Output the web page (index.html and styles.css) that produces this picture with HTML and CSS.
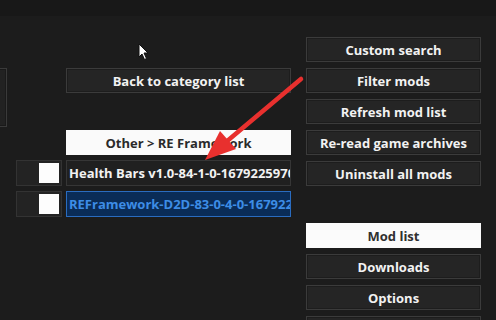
FILE: index.html
```html
<!DOCTYPE html>
<html>
<head>
<meta charset="utf-8">
<link rel="stylesheet" href="styles.css">
</head>
<body>
<div class="topbar"></div>
<div class="screen">
  <div class="left">
    <div class="stub"></div>
    <div class="btn back">Back to category list</div>
    <div class="crumb">Other &gt; RE Framework</div>
    <div class="check r4"><span class="box"></span></div>
    <div class="item r4">Health Bars v1.0-84-1-0-1679225970</div>
    <div class="check r5"><span class="box"></span></div>
    <div class="item sel r5">REFramework-D2D-83-0-4-0-1679224512</div>
  </div>
  <div class="right">
    <div class="btn">Custom search</div>
    <div class="btn">Filter mods</div>
    <div class="btn">Refresh mod list</div>
    <div class="btn">Re-read game archives</div>
    <div class="btn">Uninstall all mods</div>
    <div class="btn active gapTop">Mod list</div>
    <div class="btn">Downloads</div>
    <div class="btn">Options</div>
    <div class="btn"></div>
  </div>
</div>
<svg class="cursor" width="12" height="18" viewBox="0 0 12 18">
  <path d="M1 1 L1 14 L4 11 L6.5 16.5 L8.5 15.5 L6 10 L10 10 Z" fill="#fff" stroke="#111" stroke-width="1"/>
</svg>
<svg class="arrow" width="496" height="320" viewBox="0 0 496 320">
  <line x1="301" y1="79" x2="226" y2="142" stroke="#e8302e" stroke-width="4.5" stroke-linecap="round"/>
  <polygon points="205,160 236,149 220,131" fill="#e8302e"/>
</svg>
</body>
</html>
```
FILE: styles.css
```css
html, body {
  margin: 0;
  padding: 0;
  background: #1c1c1c;
  width: 496px;
  height: 320px;
  overflow: hidden;
  font-family: "Open Sans", "Noto Sans", sans-serif;
}
.topbar {
  height: 16px;
  background: #181818;
}
.screen {
  display: flex;
  align-items: flex-start;
}
.left {
  display: grid;
  grid-template-columns: 12px 46px 225px;
  grid-template-rows: 25px 27px 25px 26px 26px;
  column-gap: 4px;
  row-gap: 5px;
  margin-top: 52px;
}
.stub {
  grid-column: 1;
  grid-row: 1 / 3;
  margin-left: -10px;
  width: 17px;
  height: 59px;
  box-sizing: border-box;
  border: 1px solid #3a3a3a;
  background: #222;
  box-shadow: inset 0 0 0 1px #1a1a1a;
}
.btn {
  box-sizing: border-box;
  height: 25px;
  border: 1px solid #3b3b3b;
  background: #252525;
  box-shadow: inset 0 0 0 1px #1d1d1d;
  color: #f2f2f2;
  font-weight: 700;
  font-size: 13px;
  display: flex;
  align-items: center;
  justify-content: center;
  white-space: nowrap;
}
.back {
  grid-column: 3;
  grid-row: 1;
}
.crumb {
  grid-column: 3;
  grid-row: 3;
  background: #fafafa;
  color: #2a2a2a;
  font-weight: 700;
  font-size: 13px;
  display: flex;
  align-items: center;
  justify-content: center;
}
.r4 { grid-row: 4; }
.r5 { grid-row: 5; }
.check {
  grid-column: 2;
  box-sizing: border-box;
  border: 1px solid #333;
  background: #232323;
  display: flex;
  align-items: center;
  justify-content: flex-end;
  padding-right: 2px;
}
.box {
  width: 20px;
  height: 20px;
  background: #fdfdfd;
}
.item {
  grid-column: 3;
  box-sizing: border-box;
  border: 1px solid #363636;
  background: #202020;
  color: #f2f2f2;
  font-weight: 700;
  font-size: 13px;
  padding-left: 2px;
  display: flex;
  align-items: center;
  white-space: nowrap;
  overflow: hidden;
}
.item.sel {
  background: #0a2c57;
  border-color: #2a6cc0;
  color: #3d8de6;
}
.right {
  display: flex;
  flex-direction: column;
  gap: 6px;
  width: 175px;
  margin-left: 15px;
  margin-top: 21px;
}
.btn.active {
  background: #fbfbfb;
  color: #303030;
  border-color: #fbfbfb;
  box-shadow: none;
}
.gapTop {
  margin-top: 31px;
}
.cursor {
  position: absolute;
  left: 138px;
  top: 43px;
}
.arrow {
  position: absolute;
  left: 0;
  top: 0;
  pointer-events: none;
}
```
